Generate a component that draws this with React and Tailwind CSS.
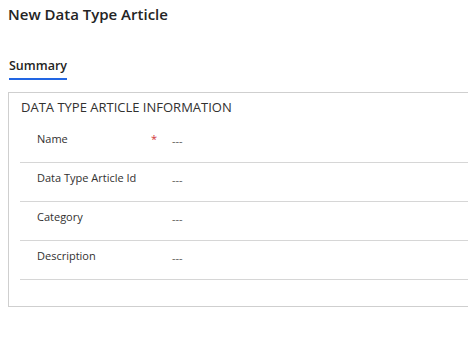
import React from 'react';

const FIELDS = [
    { label: 'Name', required: true },
    { label: 'Data Type Article Id' },
    { label: 'Category' },
    { label: 'Description' },
];

function FieldRow({ label, required }) {
    return (
        <div className="flex h-[39px] border-b border-[#d6d6d6]">
            <div className="w-[152px] shrink-0 pl-[17px] pr-[15px] pt-[7px] flex justify-between">
                <span className="text-[11px] leading-[15px] text-[#323130] whitespace-nowrap">{label}</span>
                {required && <span className="text-[11px] leading-[15px] text-[#d13438]">*</span>}
            </div>
            <div className="pt-[9px] text-[11px] leading-[15px] text-[#605e5c]">---</div>
        </div>
    );
}

export default function App() {
    return (
        <div className="w-[468px] h-[345px] overflow-hidden bg-white font-['Segoe_UI','Open_Sans',sans-serif]">
            <h1 className="pl-2 pt-[3px] text-[15px] leading-[22px] font-semibold text-[#242424]">
                New Data Type Article
            </h1>

            <div className="pl-[9px] mt-[27px]">
                <span className="inline-block pb-[3px] border-b-2 border-[#2266e3] text-[12.5px] leading-[18px] font-semibold text-[#242424]">
                    Summary
                </span>
            </div>

            <section className="ml-2 mt-[12px] w-[470px] h-[215px] border border-[#cfcfcf]">
                <h2 className="pl-3 pt-[5px] text-[13px] leading-[18px] text-[#323130]">
                    DATA TYPE ARTICLE INFORMATION
                </h2>
                <div className="ml-[11px] mt-[8px]">
                    {FIELDS.map((f) => (
                        <FieldRow key={f.label} {...f} />
                    ))}
                </div>
            </section>
        </div>
    );
}
